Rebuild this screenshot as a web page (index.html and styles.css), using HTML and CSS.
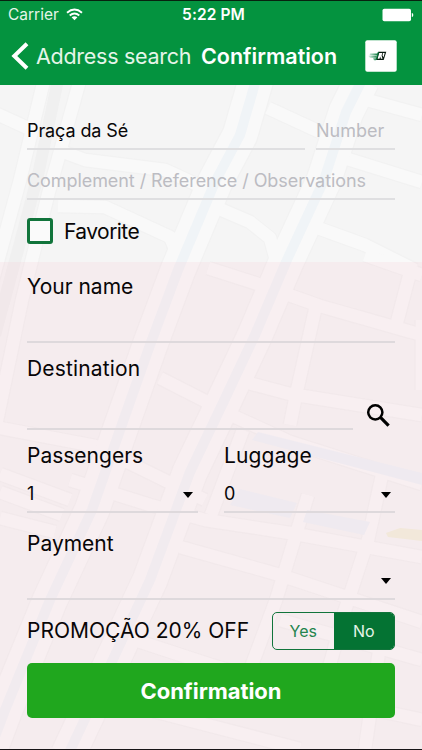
FILE: index.html
```
<!DOCTYPE html>
<html lang="en">
<head>
<meta charset="utf-8">
<title>Confirmation</title>
<link rel="stylesheet" href="styles.css">
</head>
<body>
<div class="screen">
  <header class="header">
    <div class="status">
      <span class="carrier"><span class="t-carrier">Carrier</span>
        <svg width="17" height="13" viewBox="0 0 17 13"><g fill="none" stroke="#fff" stroke-width="1.9"><path d="M1 4.7Q8.500-1.700 16 4.700"/><path d="M3.700 7.500Q8.500 3.400 13.300 7.500"/></g><path d="M5.600 9.300Q8.500 7 11.400 9.300L8.500 12.300Z" fill="#fff"/></svg>
      </span>
      <span class="clock">5:22 PM</span>
      <svg class="battery" width="33" height="14" viewBox="0 0 33 14"><rect x="1.500" y=".8" width="28.500" height="12.500" rx="1.800" fill="#fff"/><path d="M30.800 5Q32.300 5 32.300 7T30.800 9Z" fill="#fff"/></svg>
    </div>
    <nav class="nav">
      <svg class="back" width="18" height="28" viewBox="0 0 18 28"><path d="M16 1.800L3.300 14L16 26.200" fill="none" stroke="#fff" stroke-width="4"/></svg>
      <span class="t-back">Address search</span>
      <h1 class="t-title">Confirmation</h1>
      <svg class="logo" width="32" height="32" viewBox="0 0 32 32">
        <defs><linearGradient id="speed"><stop offset="0" stop-color="#0a8a45" stop-opacity=".08"/><stop offset="1" stop-color="#08753a"/></linearGradient></defs>
        <rect x=".3" y=".3" width="31.400" height="31.400" rx="2" fill="#fff"/>
        <path d="M5 13.500H13L12 15.300H4.500ZM3 15.800H12L11 17.700H5ZM8 18.200H12L11 20.300H9Z" fill="url(#speed)"/>
        <path d="M13.200 11.700H21.300L18.700 20H11Z" fill="#07180f"/>
        <path d="M14.200 13H17.300L16.600 15.500L17.500 18.700H15.900L15.200 16.500L14.500 18.700H12.600ZM18 13H19.700L18.600 17.300L17.500 15.600Z" fill="#fff"/>
        <path d="M12.800 12L10.700 20H12L14 12Z" fill="#08753a"/>
      </svg>
    </nav>
  </header>
  <main class="form">
    <svg class="map" width="422" height="664" viewBox="0 85 422 664">
      <defs>
        <g id="roads" fill="none" stroke-linejoin="round">
          <path d="M44 80L20 180L-10 290M80 80L48 195L22 300L-5 430"/>
          <path d="M-5 113L32 130M58 150L85 160L165 170L215 193M58 206L105 207L170 237L184 270M268 108L320 132M345 94L422 115M338 156L422 182M318 228L365 245L415 270M215 207L250 222L270 238L276 260M348 80V95L360 97M368 80L350 110"/>
          <path d="M208 268L255 283L320 306L422 335M412 265L396 326M315 310L296 395L290 425M160 378L211 404M245 382L290 394L422 415M365 255L422 275M422 320V390"/>
          <path d="M0 428L95 446L205 500M0 474L70 500M0 492L62 515M0 518L55 532M205 403L290 442L422 484M243 430L211 515M70 480L150 505L205 520L290 533L422 557M308 495L276 600L250 670M382 475L368 540L345 610L320 700M180 547L280 575L422 622M135 640L211 665L330 700L422 720M130 705L300 749M280 620L422 660M385 610L365 749"/>
        </g>
        <g id="rivers" fill="none" stroke-linejoin="round">
          <path d="M256 80L240 135L215 182L178 270L150 345L120 430L92 510L50 600L5 710L-12 755"/>
          <path d="M362 80L346 112L324 180L286 262L255 335L222 405L190 472L150 580L108 670L68 755"/>
        </g>
      </defs>
      <g class="edge"><use href="#roads" stroke-width="15"/><use href="#rivers" stroke-width="37"/></g>
      <g class="road"><use href="#roads" stroke-width="12.500"/><use href="#rivers" stroke-width="34.500"/></g>
      <path class="rail" d="M58 80L38 175L18 250L-5 335"/>
      <use class="water" href="#rivers" stroke-width="10"/>
      <path class="lake" d="M258 432L422 473V485L252 440ZM240 489L297 503L290 518L230 505ZM307 510L370 522L364 535L303 522Z"/>
      <path class="park" d="M386 533L400 528L422 530V541L388 537Z"/>
    </svg>
    <div class="tint"></div>
    <section class="fields">
      <div class="row address">
        <div class="field t-value">Praça da Sé</div>
        <div class="field number hint t-number">Number</div>
      </div>
      <div class="field complement hint t-complement">Complement / Reference / Observations</div>
      <label class="favorite"><span class="box"></span><span class="t-favorite">Favorite</span></label>
      <div class="label name"><span class="t-name">Your name</span></div>
      <div class="input name-input"></div>
      <div class="label"><span class="t-destination">Destination</span></div>
      <div class="row search">
        <div class="input destination-input"></div>
        <svg width="25" height="25" viewBox="0 0 25 25"><circle cx="9.300" cy="9.300" r="7.100" fill="none" stroke="#000" stroke-width="2.500"/><path d="M14.700 14.700L22.600 22.600" stroke="#000" stroke-width="3.200"/></svg>
      </div>
      <div class="row counts">
        <div class="count"><div class="label"><span class="t-passengers">Passengers</span></div><div class="select passengers"><span>1</span><i class="arrow"></i></div></div>
        <div class="count"><div class="label"><span class="t-luggage">Luggage</span></div><div class="select"><span>0</span><i class="arrow"></i></div></div>
      </div>
      <div class="label pay"><span class="t-payment">Payment</span></div>
      <div class="select payment"><span></span><i class="arrow"></i></div>
      <div class="row promo">
        <span class="t-promo">PROMOÇÃO 20% OFF</span>
        <div class="segment"><span class="yes">Yes</span><span class="no">No</span></div>
      </div>
      <div class="confirm"><span class="t-confirm">Confirmation</span></div>
    </section>
  </main>
</div>
</body>
</html>
```
FILE: styles.css
```
* { box-sizing: border-box; }
body { margin: 0; font-family: Inter, "Liberation Sans", sans-serif; color: #080607; }
svg { display: block; flex: none; }
span, h1 { white-space: nowrap; }
.screen { width: 422px; height: 750px; overflow: hidden; border-top: 1px solid #07220f; border-bottom: 1px solid #171416; }
.header { height: 84px; background: #04933f; color: #fff; }
.status { height: 27px; padding: 0 8px; display: grid; grid-template-columns: 1fr auto 1fr; align-items: center; font-size: 15.500px; }
.carrier { display: flex; align-items: center; gap: 7px; color: #e5f5e9; }
.clock { font-weight: 600; font-size: 15.500px; letter-spacing: .1px; padding-left: 5px; }
.battery { justify-self: end; }
.nav { height: 56px; padding: 0 25px 0 11px; display: flex; align-items: center; }
.t-back { width: 155px; margin-left: 7px; font-size: 21.500px; letter-spacing: -.27px; color: #e5f5e9; }
.t-title { width: 137px; margin: 0 0 0 10px; font-size: 21.500px; font-weight: 600; }
.logo { margin-left: auto; }

.form { position: relative; height: 664px; background: #f5f5f5; }
.map { position: absolute; top: 0; left: 0; }
.edge { stroke: #f2f2f2; }
.road { stroke: #f9f9f9; }
.rail { fill: none; stroke: #f0f0f0; stroke-width: 12; }
.water { stroke: #f0f4f7; }
.lake { fill: #eef3f8; }
.park { fill: #f2f1dc; }
.tint { position: absolute; top: 177px; left: 0; right: 0; bottom: 0; background: #f5cad0; opacity: .2; }
.fields { position: relative; padding: 27px 27px 0; }
.row { display: flex; }
.field { border-bottom: 2px solid #dfdfe1; font-size: 18px; display: flex; align-items: center; }
.hint { color: #bcbcc2; }
.t-value { letter-spacing: -.1px; }
.address { gap: 11px; height: 38px; }
.address .field { flex: 1; }
.address .number { flex: 0 0 79px; }
.complement { height: 50px; padding-top: 13px; letter-spacing: -.07px; }
.favorite { height: 62px; display: flex; align-items: center; gap: 11px; font-size: 21px; letter-spacing: -.55px; }
.box { width: 26px; height: 26px; border: 3px solid #11743b; border-radius: 3px; background: #fafafa; }
.label { height: 50px; display: flex; align-items: center; font-size: 21px; }
.label.name { height: 49px; }
.label.pay { height: 60px; }
.t-destination, .t-luggage { letter-spacing: .15px; }
.input { border-bottom: 2px solid #ded9dc; }
.name-input { height: 32px; }
.search { height: 37px; justify-content: space-between; }
.destination-input { width: 326px; }
.search svg { margin: 10px 4px 0 0; }
.counts { justify-content: space-between; }
.count { width: 171px; }
.select { height: 33px; border-bottom: 2px solid #ded9dc; display: flex; justify-content: space-between; align-items: center; padding: 0 4px 4px 0; font-size: 18px; }
.select.passengers { padding-right: 5px; }
.select.payment { height: 27px; padding: 0 4px 9px 0; }
.arrow { border: 5.500px solid transparent; border-top: 6px solid #000; border-bottom: 0; margin-top: 2px; }
.payment .arrow { margin-top: 0; }
.promo { height: 63px; align-items: center; justify-content: space-between; font-size: 21px; padding-bottom: 2px; }
.segment { width: 123px; height: 38px; display: grid; grid-template-columns: 1fr 1fr; border: 1px solid #11743b; border-radius: 5px; overflow: hidden; font-size: 16px; text-align: center; line-height: 36px; }
.yes { color: #23844d; }
.no { background: #047333; color: #e5f5e9; }
.confirm { height: 55px; border-radius: 5px; background: #20a71e; color: #fff; display: flex; align-items: center; justify-content: center; font-size: 22px; font-weight: 700; letter-spacing: -.05px; }
```
